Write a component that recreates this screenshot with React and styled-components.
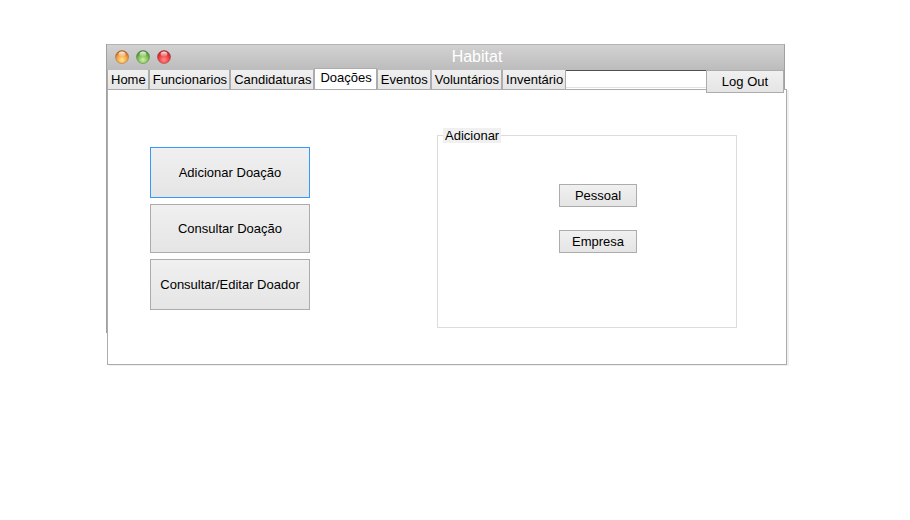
import React, { useState } from "react";
import styled, { createGlobalStyle } from "styled-components";

const GlobalStyle = createGlobalStyle`
  * { box-sizing: border-box; }
  body { margin: 0; background: #fff; color: #000; font-family: "Liberation Sans", Arial, sans-serif; font-size: 13px; line-height: 15px; }
  button { font: inherit; color: inherit; }
`;

const Page = styled.main`
  padding: 44px 121px 44px 106px;
`;

const Window = styled.section`
  padding-left: 1px;
  background: linear-gradient(#a0a0a0, #a0a0a0) left top / 1px 289px no-repeat;
`;

const TitleBar = styled.header`
  display: grid;
  grid-template-columns: 64px 1fr;
  align-items: center;
  height: 26px;
  margin-right: 4px;
  padding: 0 0 2px 8px;
  border-top: 1px solid #b4b4b4;
  border-right: 1px solid #a0a0a0;
  background: linear-gradient(#d2d2d2, #bcbcbc);
`;

const Lights = styled.div`
  display: flex;
  gap: 7px;
`;

const LightButton = styled.button`
  width: 14px;
  height: 14px;
  padding: 0;
  border: 0;
  background: none;

  svg { display: block; }
`;

const Title = styled.h1`
  margin: 0;
  padding-right: 9px;
  color: #fff;
  font-size: 16px;
  font-weight: 400;
  line-height: 18px;
  text-align: center;
`;

const TabBar = styled.nav`
  display: flex;
  align-items: flex-start;
  height: 19px;
  margin-right: 4px;
  border-right: 1px solid #a0a0a0;
`;

const Tab = styled.button`
  flex: none;
  height: ${(p) => (p.$active ? 21 : 19)}px;
  margin-top: ${(p) => (p.$active ? -2 : 0)}px;
  padding: ${(p) => (p.$active ? "0 4px 3px 5px" : "0 2px 0 3px")};
  border: solid #acacac;
  border-width: ${(p) => (p.$active ? "1px 1px 0" : "0 1px 0 1px")};
  background: ${(p) => (p.$active ? "#fff" : "linear-gradient(#f0f0f0, #e5e5e5)")};
`;

const TabSpace = styled.div`
  flex: 1;
  height: 18px;
  border-top: 1px solid #505050;
  border-bottom: 1px solid #e3e3e3;
`;

const Button = styled.button`
  padding: 0 2px;
  border: 1px solid #acacac;
  background: linear-gradient(#f0f0f0, #e5e5e5);

  &:focus-visible { outline: 1px solid #3399ff; }
`;

const LogOut = styled(Button)`
  position: relative;
  flex: none;
  width: 78px;
  height: 23px;
`;

const Panel = styled.div`
  display: flex;
  justify-content: space-between;
  align-items: flex-start;
  margin-right: 2px;
  padding: 38px 49px 36px 42px;
  border: 1px solid #acacac;
  box-shadow: 2px 1px 0 #f0f0f0;
`;

const Actions = styled.div`
  display: flex;
  flex-direction: column;
  gap: 6px;
  width: 160px;
  padding-top: 19px;
`;

const ActionButton = styled(Button)`
  height: ${(p) => p.$height}px;
  border-color: ${(p) => (p.$current ? "#3399ff" : "#acacac")};
`;

const Group = styled.fieldset`
  display: flex;
  flex-direction: column;
  width: 300px;
  min-height: 200px;
  margin: 0;
  padding: 41px 0 0 5px;
  border: 1px solid #dcdcdc;

  legend { padding: 0 2px; background: #f0f0f0; }
`;

const Choices = styled.div`
  display: flex;
  flex-direction: column;
  gap: 23px;
  width: 78px;
  margin-left: 116px;
`;

const ChoiceButton = styled(Button)`
  height: 23px;
`;

const LIGHTS = [
  { id: "amber", label: "Minimizar", dark: "#a84e1c", mid: "#f0a044", glow: "#ffe98a" },
  { id: "green", label: "Maximizar", dark: "#3a7029", mid: "#74bb4c", glow: "#d3f3a0" },
  { id: "red", label: "Fechar", dark: "#9c1a1f", mid: "#ee3a3e", glow: "#ff9088" },
];

const TABS = ["Home", "Funcionarios", "Candidaturas", "Doações", "Eventos", "Voluntários", "Inventário"];

const ACTIONS = [
  { label: "Adicionar Doação", height: 51 },
  { label: "Consultar Doação", height: 49 },
  { label: "Consultar/Editar Doador", height: 51 },
];

function Light({ id, label, dark, mid, glow }) {
  return (
    <LightButton type="button" aria-label={label}>
      <svg width="14" height="14" viewBox="0 0 14 14" aria-hidden="true">
        <defs>
          <radialGradient id={`${id}-body`} cx="50%" cy="72%" r="75%">
            <stop offset="0" stopColor={glow} />
            <stop offset="0.55" stopColor={mid} />
            <stop offset="1" stopColor={dark} />
          </radialGradient>
          <linearGradient id={`${id}-shine`} x1="0" y1="0" x2="0" y2="1">
            <stop offset="0" stopColor="#fff" stopOpacity="0.95" />
            <stop offset="1" stopColor="#fff" stopOpacity="0.1" />
          </linearGradient>
        </defs>
        <circle cx="7" cy="7" r="6.5" fill={`url(#${id}-body)`} stroke={dark} strokeOpacity="0.5" strokeWidth="0.8" />
        <ellipse cx="7" cy="4" rx="3.4" ry="2.6" fill={`url(#${id}-shine)`} />
      </svg>
    </LightButton>
  );
}

export default function App() {
  const [tab, setTab] = useState("Doações");
  const [action, setAction] = useState(ACTIONS[0].label);

  return (
    <>
      <GlobalStyle />
      <Page>
        <Window>
          <TitleBar>
            <Lights>
              {LIGHTS.map((light) => <Light key={light.id} {...light} />)}
            </Lights>
            <Title>Habitat</Title>
          </TitleBar>
          <TabBar>
            {TABS.map((name) => (
              <Tab key={name} type="button" $active={name === tab} aria-pressed={name === tab} onClick={() => setTab(name)}>
                {name}
              </Tab>
            ))}
            <TabSpace />
            <LogOut type="button">Log Out</LogOut>
          </TabBar>
          <Panel>
            <Actions>
              {ACTIONS.map(({ label, height }) => (
                <ActionButton key={label} type="button" $height={height} $current={label === action} onClick={() => setAction(label)}>
                  {label}
                </ActionButton>
              ))}
            </Actions>
            <Group>
              <legend>Adicionar</legend>
              <Choices>
                <ChoiceButton type="button">Pessoal</ChoiceButton>
                <ChoiceButton type="button">Empresa</ChoiceButton>
              </Choices>
            </Group>
          </Panel>
        </Window>
      </Page>
    </>
  );
}
